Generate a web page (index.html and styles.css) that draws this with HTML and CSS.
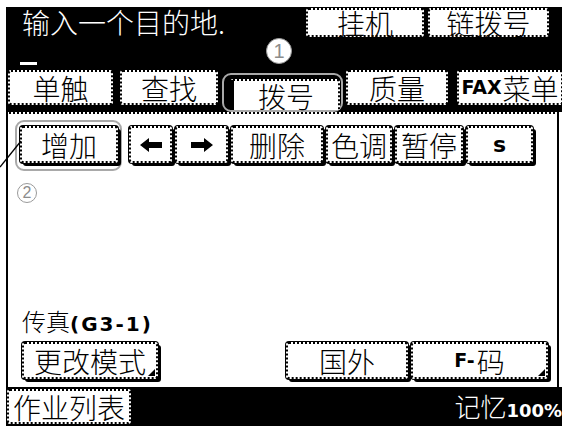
FILE: index.html
```html
<!DOCTYPE html>
<html lang="zh-CN">

<head>
    <meta charset="UTF-8">
    <meta name="viewport" content="width=device-width, initial-scale=1.0">
    <title>传真 - 输入目的地</title>
    <link rel="stylesheet" href="styles.css">
</head>

<body>

    <div class="screen">
        <div class="header">
            <div class="msg-row">
                <span class="msg">输入一个目的地.</span>
                <div class="top-btns">
                    <span class="btn top">挂机</span>
                    <span class="btn top wide">链拨号</span>
                </div>
            </div>
            <div class="cursor-row">
                <span class="cursor"></span>
            </div>
            <div class="tabs">
                <span class="btn tab tab-1">单触</span>
                <span class="btn tab tab-2">查找</span>
                <span class="hl hl-tab"><span class="btn tab active">拨号</span></span>
                <span class="btn tab tab-4">质量</span>
                <span class="btn tab tab-5"><b class="latin">FAX</b>菜单</span>
            </div>
            <span class="callout callout-1">1</span>
        </div>

        <div class="content">
            <div class="tools">
                <span class="hl hl-tool"><span class="btn tool add">增加</span></span>
                <span class="btn tool arrow-l">
                    <svg width="22" height="14" viewBox="0 0 22 14"><polygon points="0,7 9,0 9,4 22,4 22,10 9,10 9,14"/></svg>
                </span>
                <span class="btn tool arrow-r">
                    <svg width="22" height="14" viewBox="0 0 22 14"><polygon points="22,7 13,0 13,4 0,4 0,10 13,10 13,14"/></svg>
                </span>
                <span class="btn tool del">删除</span>
                <span class="btn tool tone">色调</span>
                <span class="btn tool pause">暂停</span>
                <span class="btn tool sbtn"><b class="latin">s</b></span>
            </div>
            <span class="callout callout-2">2</span>

            <div class="mode">传真<b class="latin">(G3-1)</b></div>
            <div class="bottom-btns">
                <span class="btn low corner mode-btn">更改模式</span>
                <span class="btn low intl">国外</span>
                <span class="btn low corner fcode"><b class="latin">F-</b>码</span>
            </div>
        </div>

        <div class="footer">
            <span class="btn jobs">作业列表</span>
            <span class="memory">记忆<b class="latin">100%</b></span>
        </div>
    </div>

    <!-- leader line for callout 2 -->
    <svg class="leader" width="24" height="30" viewBox="0 0 24 30">
        <line x1="0" y1="28" x2="21" y2="2" stroke="#000" stroke-width="1.3"/>
    </svg>

</body>

</html>
```

FILE: styles.css
```css
body {
    margin: 0;
    background-color: #fff;
    font-family: "Noto Sans CJK SC", "Noto Sans", sans-serif;
    font-weight: 300;
    color: #000;
    overflow: hidden;
}

.latin {
    font-family: "DejaVu Sans", "Liberation Sans", sans-serif;
    font-weight: bold;
}

.screen {
    position: relative;
    margin: 7px 0 0 6px;
    width: 556px;
}

/* generic LCD button */
.btn {
    display: flex;
    align-items: center;
    justify-content: center;
    box-sizing: border-box;
    background-color: #fff;
    border: 2px dotted #000;
    border-radius: 3px;
    box-shadow: 0 0 0 1px #000, 3px 3px 0 0 #000;
    font-size: 28px;
    line-height: 1;
    white-space: nowrap;
}

.hl {
    display: block;
    box-sizing: border-box;
    border: 2px solid #a9a9a9;
    border-radius: 9px;
}

/* header */
.header {
    position: relative;
    background-color: #000;
    height: 105px;
    padding-top: 1px;
    box-sizing: border-box;
}

.msg-row {
    display: flex;
    height: 29px;
    align-items: center;
}

.msg {
    color: #fff;
    font-size: 28px;
    line-height: 29px;
    margin-left: 16px;
}

.top-btns {
    display: flex;
    gap: 4px;
    margin-left: auto;
    margin-right: 13px;
}

.btn.top {
    width: 118px;
    height: 29px;
    box-shadow: none;
}

.btn.top.wide {
    width: 121px;
}

.cursor-row {
    height: 33px;
    padding: 25px 0 0 14px;
    box-sizing: border-box;
}

.cursor {
    display: block;
    width: 17px;
    height: 3px;
    background-color: #fff;
}

.tabs {
    display: grid;
    grid-template-columns: 112px 102px 124px 111px 1fr;
    align-items: start;
    padding-left: 2px;
}

.tab {
    height: 35px;
}

.tab-1 { width: 105px; }
.tab-2 { width: 98px; }
.tab-4 { width: 102px; }
.tab-5 { width: 106px; }

.tab-5 .latin {
    font-size: 19px;
    margin-right: 1px;
}

.hl-tab {
    width: 121px;
    margin-top: 3px;
    padding: 4px 1px 0 6px;
}

.tab.active {
    width: 110px;
    height: 31px;
    border-left: 4px solid #000;
    border-bottom: 0;
    border-radius: 3px 3px 0 0;
    box-shadow: 0 -1px 0 0 #000;
}

.callout {
    position: absolute;
    display: flex;
    align-items: center;
    justify-content: center;
    box-sizing: border-box;
    border-radius: 50%;
    border: 1.5px solid #9a9a9a;
    background-color: #fff;
    color: #8c8c8c;
    font-family: "Liberation Sans", sans-serif;
    font-weight: normal;
}

.callout-1 {
    left: 260px;
    top: 31px;
    width: 26px;
    height: 26px;
    font-size: 20px;
}

.callout-2 {
    left: 9px;
    top: 69px;
    width: 20px;
    height: 20px;
    font-size: 16px;
}

/* main area */
.content {
    position: relative;
    display: flex;
    flex-direction: column;
    box-sizing: border-box;
    width: 553px;
    height: 275px;
    background-color: #fff;
    border-left: 2px solid #000;
    border-right: 2px solid #000;
    border-top: 2px dotted #000;
}

.tools {
    display: flex;
    align-items: flex-start;
    gap: 3px;
    padding: 6px 0 0 7px;
}

.hl-tool {
    padding: 4px 2px 6px 3px;
    margin-right: 4px;
}

.tool {
    height: 37px;
    margin-top: 6px;
}

.tool.add {
    width: 98px;
    margin-top: 0;
}

.arrow-l { width: 43px; }
.arrow-r { width: 53px; }
.del { width: 92px; }
.tone { width: 66px; }
.pause { width: 68px; }
.sbtn { width: 67px; }

.sbtn .latin {
    font-size: 22px;
}

.mode {
    margin-top: auto;
    padding-left: 14px;
    font-size: 24px;
    line-height: 26px;
}

.mode .latin {
    font-size: 20px;
    letter-spacing: 2px;
}

.bottom-btns {
    display: flex;
    gap: 3px;
    margin: 5px 9px 8px 14px;
}

.low {
    height: 37px;
}

.corner {
    position: relative;
}

.corner::after {
    content: "";
    position: absolute;
    right: 1px;
    bottom: 1px;
    border-left: 7px solid transparent;
    border-bottom: 7px solid #000;
}

.mode-btn { width: 136px; }
.intl { width: 122px; margin-left: auto; }
.fcode { width: 137px; }

.fcode .latin {
    font-size: 19px;
    margin-right: 2px;
}

/* footer */
.footer {
    display: flex;
    align-items: flex-start;
    height: 39px;
    background-color: #000;
}

.btn.jobs {
    width: 124px;
    height: 35px;
    margin: 2px 0 0 1px;
    box-shadow: none;
}

.memory {
    margin-left: auto;
    align-self: center;
    color: #fff;
    font-size: 26px;
    line-height: 1;
}

.memory .latin {
    font-size: 18px;
}

.leader {
    position: absolute;
    left: 0;
    top: 139px;
}
```
